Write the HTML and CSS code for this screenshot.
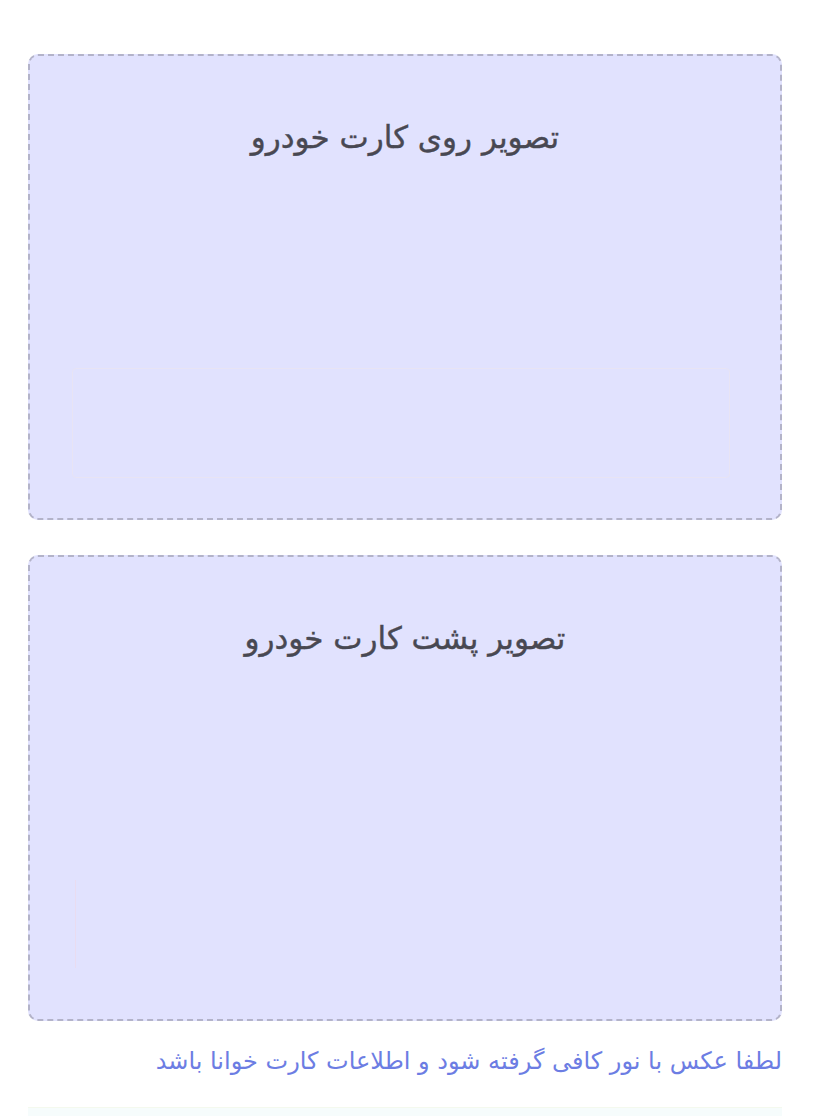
FILE: index.html
```html
<!DOCTYPE html>
<html lang="fa" dir="rtl">
<head>
<meta charset="utf-8">
<link rel="stylesheet" href="styles.css">
</head>
<body>
<main class="page">
  <section class="upload-card">
    <h2 class="card-title">تصویر روی کارت خودرو</h2>
    <div class="card-body">
      <div class="frame-front"></div>
    </div>
  </section>
  <section class="upload-card">
    <h2 class="card-title">تصویر پشت کارت خودرو</h2>
    <div class="card-body">
      <div class="frame-back"></div>
    </div>
  </section>
  <p class="hint">لطفا عکس با نور کافی گرفته شود و اطلاعات کارت خوانا باشد</p>
  <div class="bottom-bar"></div>
</main>
</body>
</html>
```
FILE: styles.css
```css
html, body {
  margin: 0;
  padding: 0;
  background: #ffffff;
}
body {
  font-family: "DejaVu Sans", "Noto Sans", sans-serif;
}
.page {
  width: 754px;
  margin: 0 auto 0 28px;
  padding-top: 54px;
  display: flex;
  flex-direction: column;
  height: 1062px;
  overflow: hidden;
}
.upload-card {
  box-sizing: border-box;
  height: 466px;
  background: #e1e2fe;
  border: 2px dashed #b3b3c9;
  border-radius: 10px;
  display: flex;
  flex-direction: column;
  align-items: center;
}
.upload-card + .upload-card {
  margin-top: 35px;
}
.card-title {
  margin: 61px 0 0;
  font-size: 31px;
  font-weight: normal;
  color: #484852;
  line-height: 40px;
  -webkit-text-stroke: 0.4px #484852;
}
.card-body {
  flex: 1;
  width: 100%;
  position: relative;
}
.frame-front {
  position: absolute;
  left: 42px;
  right: 50px;
  top: 211px;
  height: 108px;
  border: 1px solid #e8e4f4;
  border-radius: 4px;
}
.frame-back {
  position: absolute;
  left: 45px;
  top: 222px;
  width: 1px;
  height: 88px;
  background: #e9dcf0;
}
.hint {
  margin: 24px 0 0;
  font-size: 24px;
  color: #6c7de3;
  line-height: 32px;
  text-align: right;
}
.bottom-bar {
  margin: auto -16px 0 -18px;
  height: 8px;
  border-top: 1px solid #f4f9ee;
  background: #f6fcfc;
  border-radius: 6px 6px 0 0;
}
```
